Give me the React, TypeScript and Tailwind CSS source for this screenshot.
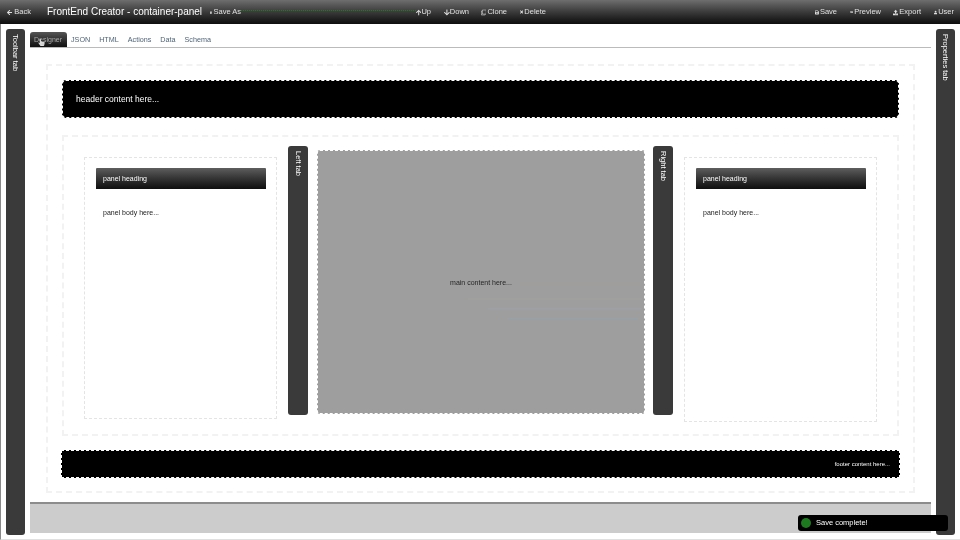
import { FaArrowLeft, FaArrowUp, FaArrowDown, FaRegClone, FaTimes, FaEye, FaSave, FaUpload, FaUser, FaHandPointer } from "react-icons/fa";
import type { ReactNode } from "react";

function BarItem({ icon, label, className = "" }: { icon: ReactNode; label: string; className?: string }) {
  return (
    <span className={`flex items-center whitespace-nowrap text-[7.5px] leading-none text-[#e0e0e0] ${className}`}>
      {icon}
      {label}
    </span>
  );
}

function SideTab({ label, className = "" }: { label: string; className?: string }) {
  return (
    <div className={`shrink-0 rounded-[3px] bg-[#3a3a3a] text-[7.5px] leading-none text-white [writing-mode:vertical-rl] ${className}`}>
      {label}
    </div>
  );
}

function Panel({ className = "" }: { className?: string }) {
  return (
    <div className={`w-[193px] shrink-0 border border-dashed border-[#e4e4e4] pl-[11px] pr-[10px] pt-[10px] ${className}`}>
      <div className="flex h-[21px] items-center rounded-t-[1px] bg-gradient-to-b from-[#5e5e5e] to-[#0f0f0f] pl-[7px] pt-px text-[7px] text-white">
        panel heading
      </div>
      <p className="mt-[19px] pl-[7px] text-[7px] leading-[10px] text-[#222]">panel body here...</p>
    </div>
  );
}

export default function App() {
  const tabs = ["JSON", "HTML", "Actions", "Data", "Schema"];
  return (
    <div className="relative flex h-[540px] w-[960px] flex-col overflow-hidden bg-white font-['Liberation_Sans',Arial,sans-serif] blur-[0.3px]">
      {/* top bar */}
      <div className="flex h-6 shrink-0 items-center bg-gradient-to-b from-[#6e6e6e] to-[#0e0e0e] pl-[7px] pr-[6px]">
        <BarItem icon={<FaArrowLeft className="mr-[2px] h-[7px] w-[7px]" />} label="Back" className="w-[24px]" />
        <span className="ml-[16px] w-[157px] whitespace-nowrap text-[10px] leading-none text-white">FrontEnd Creator - container-panel</span>
        <BarItem icon={<FaSave className="mr-px h-[7px] w-[7px]" />} label="Save As" className="ml-[6px] w-[31px]" />
        <div className="mb-[3px] h-0 w-[175px] border-t border-dotted border-[#1f7a1f]" />
        <BarItem icon={<FaArrowUp className="h-[7px] w-[7px]" />} label="Up" className="w-[15px]" />
        <BarItem icon={<FaArrowDown className="h-[7px] w-[7px]" />} label="Down" className="ml-[13px] w-[25px]" />
        <BarItem icon={<FaRegClone className="mr-px h-[7px] w-[7px]" />} label="Clone" className="ml-[12px] w-[26px]" />
        <BarItem icon={<FaTimes className="mr-px h-[6px] w-[6px]" />} label="Delete" className="ml-[13px] w-[26px]" />
        <BarItem icon={<FaSave className="mr-px h-[7px] w-[7px]" />} label="Save" className="ml-auto w-[22px]" />
        <BarItem icon={<FaEye className="mr-px h-[8px] w-[8px]" />} label="Preview" className="ml-[13px] w-[31px]" />
        <BarItem icon={<FaUpload className="mr-px h-[7px] w-[7px]" />} label="Export" className="ml-[12px] w-[28px]" />
        <BarItem icon={<FaUser className="mr-px h-[7px] w-[7px]" />} label="User" className="ml-[13px] w-[20px]" />
      </div>

      <div className="flex min-h-0 flex-1 border-b border-l border-b-[#e0e0e0] border-l-[#8a8a8a] pb-[4px] pl-[5px] pr-[5px] pt-[5px]">
        <SideTab label="Toolbar tab" className="w-[19px] pr-[6px] pt-[5px]" />

        <div className="ml-[5px] flex w-[901px] shrink-0 flex-col">
          {/* tabs */}
          <div className="flex h-[19px] shrink-0 items-end border-b border-[#bbbbbb] pt-[3px]">
            <div className="relative flex h-[15px] w-[37px] items-center rounded-t-[3px] bg-gradient-to-b from-[#555555] to-[#111111] pl-[4px] pt-px text-[7px] text-[#aaaaaa]">
              Designer
              <FaHandPointer className="absolute left-[8px] top-[7px] h-[7px] w-[7px] text-[#dddddd]" />
            </div>
            {tabs.map((t, i) => (
              <span key={t} className={`flex h-[15px] items-center pt-px text-[7.2px] text-[#4f6377] ${i === 0 ? "ml-[4px]" : "ml-[9px]"}`}>
                {t}
              </span>
            ))}
          </div>

          {/* designer canvas */}
          <div className="ml-[16px] mr-[16px] mt-[16px] flex h-[429px] shrink-0 flex-col border-2 border-dashed border-[#f2f2f2] px-[14px] pt-[14px]">
            <div className="flex h-[38px] shrink-0 items-center rounded-[4px] border border-dashed border-white bg-black pl-[13px] text-[8.5px] text-white">
              header content here...
            </div>

            <div className="mt-[17px] flex h-[301px] shrink-0 items-start border-2 border-dashed border-[#f2f2f2] pl-[20px] pt-[9px]">
              <Panel className="mt-[11px] h-[262px]" />
              <SideTab label="Left tab" className="ml-[11px] h-[269px] w-[20px] pr-[6px] pt-[5px]" />
              <div className="relative ml-[9px] mt-[4px] flex h-[264px] w-[328px] shrink-0 items-center justify-center rounded-[3px] border border-dashed border-white bg-[#9e9e9e] pt-[2px] text-[7px] text-[#262626]">
                main content here...
                <svg className="absolute inset-0 h-full w-full" viewBox="0 0 326 262" fill="none">
                  <path d="M200 133H324" stroke="#b49b90" strokeWidth="1" opacity="0.35" />
                  <path d="M150 148H324" stroke="#a8a8a0" strokeWidth="1" opacity="0.5" />
                  <path d="M170 158H324" stroke="#9aa8b0" strokeWidth="1" opacity="0.6" />
                  <path d="M190 168H320" stroke="#90a8b8" strokeWidth="1" opacity="0.6" />
                </svg>
              </div>
              <SideTab label="Right tab" className="ml-[8px] h-[269px] w-[20px] pr-[6px] pt-[5px]" />
              <Panel className="ml-[11px] mt-[11px] h-[265px]" />
            </div>

            <div className="-mx-px mt-[14px] flex h-[28px] shrink-0 items-center justify-end border border-dashed border-white bg-black pr-[9px] text-[6px] text-white">
              footer content here...
            </div>
          </div>

          {/* bottom bar */}
          <div className="mt-[9px] h-[31px] shrink-0 border-t-2 border-[#8c8c8c] bg-[#cccccc]" />
        </div>

        <SideTab label="Properties tab" className="ml-[5px] w-[19px] pr-[6px] pt-[5px]" />
      </div>

      {/* toast */}
      <div className="absolute left-[798px] top-[515px] flex h-4 w-[150px] items-center rounded-[3px] bg-black pl-[3px] text-[7.5px] text-white">
        <span className="h-[10px] w-[10px] rounded-full bg-[#1e7a1e]" />
        <span className="ml-[5px]">Save complete!</span>
      </div>
    </div>
  );
}
